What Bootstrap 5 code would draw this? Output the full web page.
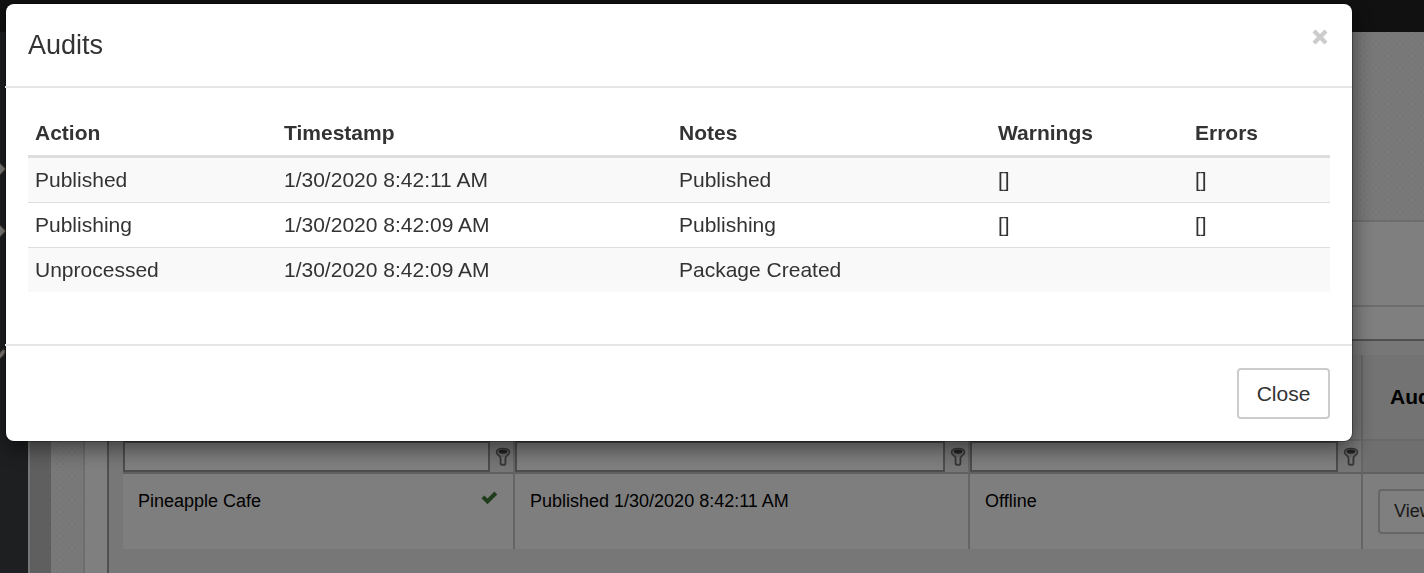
<!DOCTYPE html>
<html lang="en">
<head>
    <meta charset="UTF-8">
    <meta name="viewport" content="width=device-width, initial-scale=1">
    <title>Audits</title>
    <link rel="stylesheet" href="https://cdn.jsdelivr.net/npm/bootstrap@5.3.0/dist/css/bootstrap.min.css">
    <style>
        body {
            font-family: "Liberation Sans", Arial, sans-serif;
            font-size: 18px;
            color: #000;
            background: #eee;
            overflow: hidden;
        }

        .topbar {
            height: 32px;
            background: #222;
        }

        .shell {
            height: 541px;
        }

        .sidebar {
            width: 28px;
            background: #3b3e41;
        }

        .sidebar svg {
            width: 6px;
            height: 16px;
            display: block;
        }

        .gutter {
            width: 23px;
            background: #bebebe;
            border-left: 2px solid #ececec;
        }

        .dotted {
            background-color: #f3f3f3;
            background-image: radial-gradient(#ececec 1px, transparent 1.3px), radial-gradient(#ececec 1px, transparent 1.3px);
            background-size: 6px 6px;
            background-position: 0 0, 3px 3px;
        }

        .page-side {
            width: 32px;
        }

        .page-top {
            height: 188px;
        }

        .panel {
            background: #fff;
            border-left: 2px solid #dadada;
        }

        .panel-head {
            height: 87px;
            border-top: 2px solid #dadada;
            border-bottom: 2px solid #dadada;
        }

        .grid-box {
            margin: 32px 0 0 22px;
            height: 234px;
            padding: 14px 0 0 14px;
            background: #eee;
            border-top: 2px solid #a0a0a0;
            border-left: 2px solid #a0a0a0;
        }

        .grid-table {
            display: grid;
            grid-template-columns: 392px 455px 393px 200px;
            grid-template-rows: 86px 33px 75px;
        }

        .grid-table > div {
            border-right: 2px solid #cacaca;
        }

        .g-head {
            background: #e7e7e7;
            border-bottom: 2px solid #d2d2d2;
            font-weight: bold;
            padding: 26px 27px;
            font-size: 21px;
        }

        .g-filter {
            background: #ececec;
            border-bottom: 2px solid #c0c0c0;
        }

        .g-filter .fbox {
            flex: 1;
            background: #fff;
            border: 2px solid #9a9a9a;
        }

        .g-filter svg {
            width: 16px;
            height: 20px;
            margin: 6px 2px 0 5px;
        }

        .g-empty {
            background: #dedede;
        }

        .g-cell {
            background: #fcfcfc;
            padding: 14px 15px;
        }

        .check-icon {
            width: 17px;
            height: 14px;
            margin-top: 3px;
        }

        .view-btn {
            height: 45px;
            width: 150px;
            margin-top: 1px;
            padding: 0 14px;
            border: 2px solid #ccc;
            border-radius: 4px;
            background: #fff;
            color: #333;
            font-size: 18px;
            text-align: left;
        }

        .modal-dialog {
            width: 1346px;
            max-width: none;
            margin: 4px 0 0 6px;
        }

        .modal-content {
            height: 437px;
            border: 0;
            border-radius: 8px;
            color: #333;
            font-size: 21px;
            line-height: 30px;
            box-shadow: 0 0 0 1px rgba(0, 0, 0, .3), 0 7px 22px rgba(0, 0, 0, .5);
        }

        .modal-header {
            height: 84px;
            margin-left: -1px;
            padding: 21px 22px 21px 23px;
            border-bottom: 2px solid #e5e5e5;
        }

        .modal-title {
            font-size: 27px;
            line-height: 41px;
            font-weight: normal;
        }

        .close-x {
            padding: 0;
            border: 0;
            background: none;
            line-height: 0;
            margin: 4px 2px 0 0;
        }

        .modal-body {
            padding: 22px 22px 0;
        }

        .audit-table {
            table-layout: fixed;
            border-collapse: separate;
            border-spacing: 0;
            --bs-table-bg: transparent;
            --bs-table-color: #333;
            --bs-table-striped-bg: #f9f9f9;
            --bs-table-striped-color: #333;
            color: #333;
        }

        .audit-table > :not(caption) > * > * {
            padding: 7px 7px;
            border-bottom: 0;
            border-top: 1px solid #ddd;
        }

        .audit-table > thead > tr > th {
            padding: 8px 7px 7px;
            border-top: 0;
        }

        .audit-table > tbody > tr:first-child > td {
            border-top: 3px solid #ddd;
        }

        .modal-footer {
            height: 97px;
            margin-left: -1px;
            padding: 0 22px;
            border-top: 2px solid #e5e5e5;
        }

        .close-btn {
            width: 93px;
            height: 51px;
            margin: 0;
            padding: 0;
            border: 2px solid #ccc;
            border-radius: 4px;
            color: #333;
            background: #fff;
            font-size: 21px;
        }
    </style>
</head>
<body>

<svg class="d-none">
    <symbol id="filter" viewBox="0 0 16 20">
        <path d="M1.500 5.200C1.500 2.600 4 1.500 8 1.500s6.500 1.100 6.500 3.700c0 2.800-4 3.600-4 6V16.500c0 2-5 2-5 0V11.200c0-2.400-4-3.200-4-6z" fill="#ccc" stroke="#6a6a6a" stroke-width="1.600"/>
        <ellipse cx="8" cy="4.600" rx="4.300" ry="2.200" fill="#444"/>
        <path d="M8 10v6" stroke="#eee" stroke-width="1.800"/>
    </symbol>
</svg>

<div class="topbar"></div>
<div class="shell d-flex">
    <nav class="sidebar flex-shrink-0">
        <svg style="margin-top: 129px" viewBox="0 0 6 16"><path d="M-1 1.500L5.500 8L-1 14.500z" fill="#fff" stroke="#d0a888"/></svg>
        <svg style="margin-top: 46px" viewBox="0 0 6 16"><path d="M-1 1.500L5.500 8L-1 14.500z" fill="#fff" stroke="#d0a888"/></svg>
        <svg style="margin-top: 107px" viewBox="0 0 6 16"><path d="M-1 9L1.500 5Q5 2 5 6Q4 10-1 13z" fill="#fff" stroke="#d0a888"/></svg>
    </nav>
    <div class="gutter flex-shrink-0"></div>
    <div class="page-side dotted flex-shrink-0"></div>
    <main class="flex-grow-1 overflow-hidden">
        <div class="page-top dotted"></div>
        <div class="panel">
            <div class="panel-head"></div>
            <div class="grid-box">
                <div class="grid-table">
                    <div class="g-head"></div>
                    <div class="g-head"></div>
                    <div class="g-head"></div>
                    <div class="g-head">Audits</div>

                    <div class="g-filter d-flex"><span class="fbox"></span><svg><use href="#filter"/></svg></div>
                    <div class="g-filter d-flex"><span class="fbox"></span><svg><use href="#filter"/></svg></div>
                    <div class="g-filter d-flex"><span class="fbox"></span><svg><use href="#filter"/></svg></div>
                    <div class="g-filter g-empty"></div>

                    <div class="g-cell d-flex justify-content-between">
                        <span>Pineapple Cafe</span>
                        <svg class="check-icon" viewBox="0 0 17 14"><path d="M.5 7.300L3.300 4.500L6.500 7.500L13.400 .6L16.300 3.400L6.500 13.200z" fill="#3f7a3a"/></svg>
                    </div>
                    <div class="g-cell">Published 1/30/2020 8:42:11 AM</div>
                    <div class="g-cell">Offline</div>
                    <div class="g-cell"><button type="button" class="view-btn">View</button></div>
                </div>
            </div>
        </div>
    </main>
</div>

<div class="modal-backdrop show"></div>

<!-- Audits modal -->
<div class="modal d-block overflow-hidden" tabindex="-1">
    <div class="modal-dialog">
        <div class="modal-content">
            <div class="modal-header align-items-start">
                <h4 class="modal-title">Audits</h4>
                <button type="button" class="close-x" aria-label="Close">
                    <svg width="16" height="16" viewBox="0 0 16 16"><path d="M2 2L14 14M14 2L2 14" stroke="#ccc" stroke-width="4.300"/></svg>
                </button>
            </div>
            <div class="modal-body">
                <table class="table table-striped audit-table mb-0">
                    <colgroup>
                        <col style="width: 249px">
                        <col style="width: 395px">
                        <col style="width: 319px">
                        <col style="width: 197px">
                        <col style="width: 142px">
                    </colgroup>
                    <thead>
                        <tr>
                            <th>Action</th>
                            <th>Timestamp</th>
                            <th>Notes</th>
                            <th>Warnings</th>
                            <th>Errors</th>
                        </tr>
                    </thead>
                    <tbody>
                        <tr>
                            <td>Published</td>
                            <td>1/30/2020 8:42:11 AM</td>
                            <td>Published</td>
                            <td>[]</td>
                            <td>[]</td>
                        </tr>
                        <tr>
                            <td>Publishing</td>
                            <td>1/30/2020 8:42:09 AM</td>
                            <td>Publishing</td>
                            <td>[]</td>
                            <td>[]</td>
                        </tr>
                        <tr>
                            <td>Unprocessed</td>
                            <td>1/30/2020 8:42:09 AM</td>
                            <td>Package Created</td>
                            <td></td>
                            <td></td>
                        </tr>
                    </tbody>
                </table>
            </div>
            <div class="modal-footer">
                <button type="button" class="btn close-btn">Close</button>
            </div>
        </div>
    </div>
</div>

<script src="https://cdn.jsdelivr.net/npm/bootstrap@5.3.0/dist/js/bootstrap.bundle.min.js"></script>
</body>
</html>
